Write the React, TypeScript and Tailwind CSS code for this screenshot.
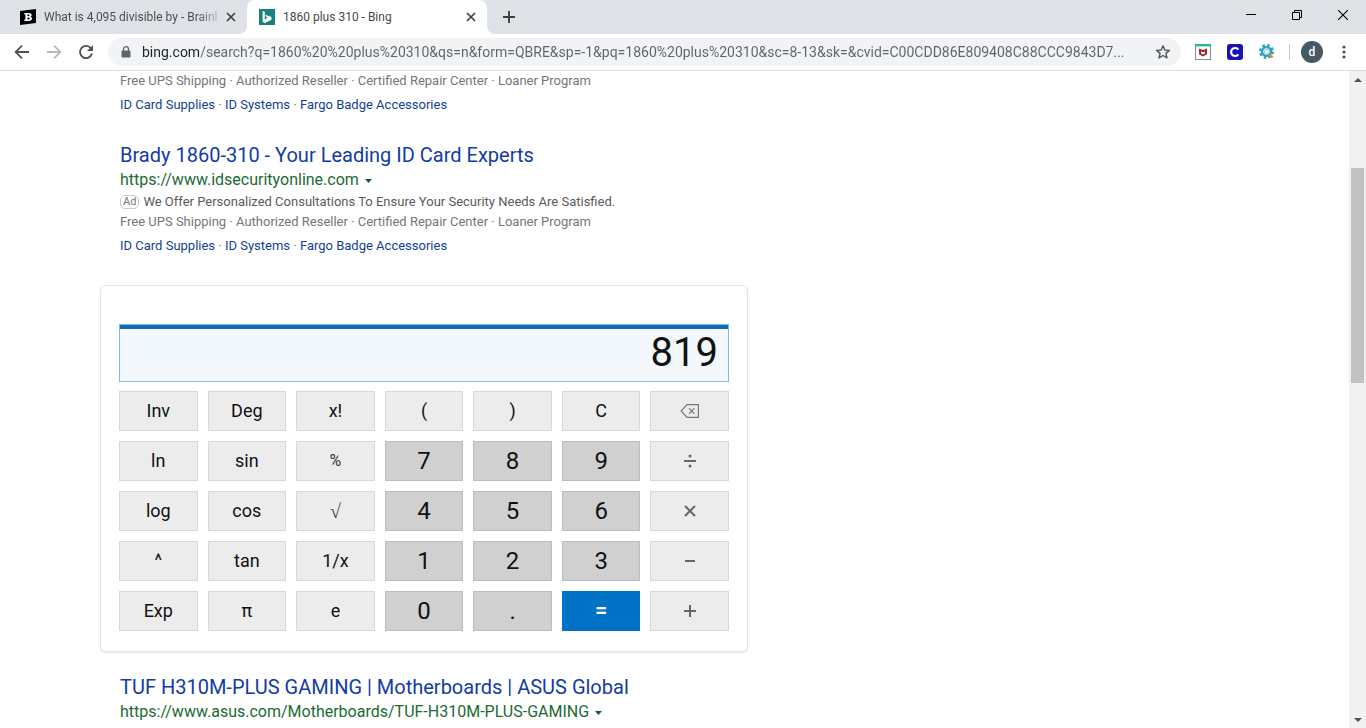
import React from "react";

const URL_TEXT =
  "bing.com/search?q=1860%20%20plus%20310&qs=n&form=QBRE&sp=-1&pq=1860%20plus%20310&sc=8-13&sk=&cvid=C00CDD86E809408C88CCC9843D7...";

const BackspaceIcon = () => (
  <svg width="20" height="16" viewBox="0 0 20 16" fill="none" stroke="#777" strokeWidth="1.2" aria-hidden="true">
    <path d="M7 1.6h11.4v12.8H7L1.2 8z" />
    <path d="M9 5.2l5.4 5.6M14.4 5.2L9 10.8" />
  </svg>
);

const OpIcon = ({ d }: { d: string }) => (
  <svg width="16" height="16" viewBox="0 0 16 16" fill="none" stroke="#666" strokeWidth="2" aria-hidden="true">
    <path d={d} />
  </svg>
);

const DivideIcon = () => (
  <svg width="16" height="16" viewBox="0 0 16 16" fill="#666" aria-hidden="true">
    <rect x="2" y="7" width="12" height="2" />
    <circle cx="8" cy="3.1" r="1.5" />
    <circle cx="8" cy="12.9" r="1.5" />
  </svg>
);

type Key = { label: string; kind?: "num" | "eq" | "small" | "root"; icon?: React.ReactNode };

const KEYS: Key[] = [
  { label: "Inv" },
  { label: "Deg" },
  { label: "x!" },
  { label: "(" },
  { label: ")" },
  { label: "C" },
  { label: "Backspace", icon: <BackspaceIcon /> },
  { label: "ln" },
  { label: "sin" },
  { label: "%", kind: "small" },
  { label: "7", kind: "num" },
  { label: "8", kind: "num" },
  { label: "9", kind: "num" },
  { label: "Divide", icon: <DivideIcon /> },
  { label: "log" },
  { label: "cos" },
  { label: "√", kind: "root" },
  { label: "4", kind: "num" },
  { label: "5", kind: "num" },
  { label: "6", kind: "num" },
  { label: "Multiply", icon: <OpIcon d="M3 3l10 10M13 3L3 13" /> },
  { label: "^" },
  { label: "tan" },
  { label: "1/x" },
  { label: "1", kind: "num" },
  { label: "2", kind: "num" },
  { label: "3", kind: "num" },
  { label: "Subtract", icon: <OpIcon d="M3 8h10" /> },
  { label: "Exp" },
  { label: "π" },
  { label: "e" },
  { label: "0", kind: "num" },
  { label: ".", kind: "num" },
  { label: "=", kind: "eq" },
  { label: "Add", icon: <OpIcon d="M2 8h12M8 2v12" /> },
];

const KEY_STYLE = {
  fn: "bg-[#ececec] border-[#d8d8d8] text-[#111] text-[18px] pb-0.5",
  small: "bg-[#ececec] border-[#d8d8d8] text-[#333] text-[16px]",
  root: "bg-[#ececec] border-[#d8d8d8] text-[#444] text-[20px] font-['Liberation_Serif',serif]",
  num: "bg-[#d0d0d0] border-[#bdbdbd] text-[#111] text-[24px]",
  eq: "bg-[#0072c6] border-[#0072c6] text-white text-[22px] font-medium pb-0.5",
  icon: "bg-[#ececec] border-[#d8d8d8]",
};

const TabClose = () => (
  <svg width="10" height="10" viewBox="0 0 10 10" stroke="#3c4043" strokeWidth="1.7" aria-hidden="true">
    <path d="M1 1l8 8M9 1L1 9" />
  </svg>
);

function TabStrip() {
  return (
    <header className="flex h-[34px] shrink-0 bg-[#dee1e6] text-[12px] text-[#45494d]">
      <div className="flex w-[247px] items-center pl-5 pr-1.5">
        <svg width="16" height="16" viewBox="0 0 16 16" className="shrink-0" aria-hidden="true">
          <path d="M0 2L16 0v14L0 16z" fill="#000" />
          <path d="M4.4 3.9h4.3c1.9 0 3 .7 3 2 0 .9-.5 1.5-1.3 1.8 1 .3 1.6.9 1.6 1.9 0 1.5-1.2 2.4-3.3 2.4H4.4v-1.5h1V5.4h-1zM7.4 5.4v1.7h.9c.8 0 1.2-.3 1.2-.9s-.4-.8-1.2-.8zm0 3v2h1c.8 0 1.3-.3 1.3-1s-.5-1-1.3-1z" fill="#fff" />
        </svg>
        <span className="ml-2 whitespace-nowrap bg-[linear-gradient(to_right,#45494d_88%,#b8bcc0)] bg-clip-text text-transparent">
          What is 4,095 divisible by - Brainl
        </span>
        <button aria-label="Close tab" className="ml-auto flex size-5 shrink-0 items-center justify-center">
          <TabClose />
        </button>
      </div>
      <div className="relative flex w-[240px] items-center rounded-t-lg bg-white pl-3 pr-1.5">
        <svg className="absolute -left-2 bottom-0" width="8" height="8" viewBox="0 0 8 8" aria-hidden="true">
          <path d="M8 0v8H0a8 8 0 0 0 8-8z" fill="#fff" />
        </svg>
        <svg className="absolute -right-2 bottom-0" width="8" height="8" viewBox="0 0 8 8" aria-hidden="true">
          <path d="M0 0v8h8a8 8 0 0 1-8-8z" fill="#fff" />
        </svg>
        <svg width="16" height="16" viewBox="0 0 16 16" className="shrink-0" aria-hidden="true">
          <rect width="16" height="16" fill="#17827b" />
          <path d="M3.6 2l2.2.8v7.6l2.8-1.7-1.4-.7-.9-2.2 6.2 2.3v2.6L5.8 14l-2.2-1.3z" fill="#fff" />
        </svg>
        <span className="ml-2 flex-1 whitespace-nowrap">1860 plus 310 - Bing</span>
        <button aria-label="Close tab" className="flex size-5 items-center justify-center">
          <TabClose />
        </button>
      </div>
      <button aria-label="New tab" className="flex w-11 items-center justify-center">
        <svg width="12" height="12" viewBox="0 0 12 12" stroke="#3c4043" strokeWidth="1.9" aria-hidden="true">
          <path d="M6 0v12M0 6h12" />
        </svg>
      </button>
      <div className="ml-auto flex pb-1">
        <button aria-label="Minimize" className="flex w-[46px] items-center justify-center">
          <svg width="10" height="10" viewBox="0 0 10 10" aria-hidden="true"><path d="M0 4.5h10" stroke="#000" /></svg>
        </button>
        <button aria-label="Restore" className="flex w-[46px] items-center justify-center">
          <svg width="10" height="10" viewBox="0 0 10 10" fill="none" stroke="#000" aria-hidden="true">
            <path d="M.5 2.5h7v7h-7zM2.5 2.5v-2h7v7h-2" />
          </svg>
        </button>
        <button aria-label="Close window" className="flex w-[46px] items-center justify-center">
          <svg width="10" height="10" viewBox="0 0 10 10" stroke="#000" strokeWidth="1.1" aria-hidden="true">
            <path d="M0 0l10 10M10 0L0 10" />
          </svg>
        </button>
      </div>
    </header>
  );
}

const NavArrow = ({ color, flip }: { color: string; flip?: boolean }) => (
  <svg width="16" height="16" viewBox="0 0 16 16" fill="none" stroke={color} strokeWidth="1.8" aria-hidden="true">
    <path d={flip ? "M1 8h13M8 1.6L14.4 8 8 14.4" : "M15 8H2M8 1.6L1.6 8 8 14.4"} />
  </svg>
);

function Toolbar() {
  return (
    <div className="flex h-[37px] shrink-0 items-center border-b border-[#dadce0] bg-white pl-1.5">
      <button aria-label="Back" className="flex w-8 justify-center"><NavArrow color="#505458" /></button>
      <button aria-label="Forward" className="flex w-8 justify-center"><NavArrow color="#b8babd" flip /></button>
      <button aria-label="Reload" className="flex w-8 justify-center">
        <svg width="16" height="16" viewBox="0 0 16 16" aria-hidden="true">
          <path d="M13.2 4.6A6.1 6.1 0 1 0 14 9.6" fill="none" stroke="#505458" strokeWidth="1.9" />
          <path d="M15 1v6H9z" fill="#505458" />
        </svg>
      </button>
      <form className="ml-1.5 flex h-7 min-w-0 flex-1 items-center rounded-full bg-[#f1f3f4] pl-[13px] pr-2.5">
        <svg width="10" height="12" viewBox="0 0 10 12" className="shrink-0" aria-hidden="true">
          <rect x=".5" y="4.4" width="9" height="7.2" rx="1" fill="#5f6368" />
          <path d="M2.5 5V3.2a2.5 2.5 0 0 1 5 0V5" fill="none" stroke="#5f6368" strokeWidth="1.3" />
        </svg>
        <input
          aria-label="Address"
          defaultValue={URL_TEXT}
          className="ml-[11px] min-w-0 flex-1 bg-[linear-gradient(to_right,#202124_57px,#5f6368_57px)] bg-clip-text text-[14px] text-transparent outline-none"
        />
        <button type="button" aria-label="Bookmark" className="ml-2 shrink-0">
          <svg width="16" height="16" viewBox="0 0 16 16" fill="none" stroke="#505458" strokeWidth="1.4" strokeLinejoin="round" aria-hidden="true">
            <path d="M8 1.8l1.8 4.2 4.6.4-3.5 3 1.1 4.5L8 11.5l-4 2.4 1.1-4.5-3.5-3 4.6-.4z" />
          </svg>
        </button>
      </form>
      <div className="ml-3.5 flex items-center gap-4">
        <button aria-label="McAfee WebAdvisor">
          <svg width="16" height="16" viewBox="0 0 16 16" aria-hidden="true">
            <rect x=".5" y=".5" width="15" height="15" fill="#fff" stroke="#8b8b8b" />
            <path d="M0 0h16v2.4H0z" fill="#12c48b" />
            <path d="M4 4.4l4 1.7 4-1.7v5.9l-4 2.2-4-2.2z" fill="#a3242c" />
            <path d="M6 7.4l2 .9 2-.9v1.9l-2 1.1-2-1.1z" fill="#fff" />
          </svg>
        </button>
        <button aria-label="C extension">
          <svg width="16" height="16" viewBox="0 0 16 16" aria-hidden="true">
            <rect width="16" height="16" rx="3" fill="#1c12b4" />
            <path d="M11.3 5.6A4 4 0 1 0 11.3 10.4" fill="none" stroke="#fff" strokeWidth="2.2" />
          </svg>
        </button>
        <button aria-label="Search settings extension">
          <svg width="16" height="16" viewBox="0 0 16 16" aria-hidden="true">
            <circle cx="7.5" cy="7.5" r="6.2" fill="none" stroke="#2aa3c4" strokeWidth="2.6" strokeDasharray="2.6 2.27" />
            <circle cx="7.5" cy="7.5" r="4.4" fill="#fff" stroke="#2aa3c4" strokeWidth="2.4" />
            <circle cx="7.8" cy="7.8" r="2.5" fill="#fff" stroke="#7fa9bb" strokeWidth=".8" />
            <path d="M10.6 10.6l3 2.8" stroke="#f08a24" strokeWidth="2.2" />
          </svg>
        </button>
      </div>
      <span className="ml-3.5 h-4 w-px bg-[#c6c9cd]" />
      <button aria-label="Profile" className="ml-[11px] flex size-[22px] items-center justify-center rounded-full bg-[#455a64] text-[12px] font-medium text-white">
        d
      </button>
      <button aria-label="Menu" className="ml-[11px] mr-3 flex w-5 justify-center">
        <svg width="4" height="14" viewBox="0 0 4 14" fill="#505458" aria-hidden="true">
          <circle cx="2" cy="2" r="1.6" /><circle cx="2" cy="7" r="1.6" /><circle cx="2" cy="12" r="1.6" />
        </svg>
      </button>
    </div>
  );
}

const AdExtras = () => (
  <>
    <p className="text-[13px] leading-5 text-[#767676]">
      Free UPS Shipping · Authorized Reseller · Certified Repair Center · Loaner Program
    </p>
    <p className="mt-1 text-[13px] leading-5 text-[#767676]">
      <a href="#supplies" className="text-[#123f94]">ID Card Supplies</a> ·{" "}
      <a href="#systems" className="text-[#123f94]">ID Systems</a> ·{" "}
      <a href="#fargo" className="text-[#123f94]">Fargo Badge Accessories</a>
    </p>
  </>
);

const ResultHead = ({ title, url }: { title: string; url: string }) => (
  <>
    <h2 className="text-[20px] leading-7">
      <a href="#result" className="text-[#123ba6]">{title}</a>
    </h2>
    <p className="flex items-center gap-1.5 text-[16px] leading-[22px] text-[#1a6b34]">
      {url}
      <svg width="7" height="4" viewBox="0 0 7 4" className="mt-0.5" aria-hidden="true">
        <path d="M0 0h7L3.5 4z" fill="#14602a" />
      </svg>
    </p>
  </>
);

function Calculator() {
  return (
    <section
      aria-label="Calculator"
      className="-ml-5 mt-[29px] rounded-[5px] border border-[#e4e4e4] bg-white px-[18px] pt-[38px] pb-5 shadow-[0_1px_2px_rgba(0,0,0,0.1)]"
    >
      <div className="border border-[#86b4ec] bg-[#f2f8fc]">
        <input
          aria-label="Result"
          defaultValue="819"
          className="block h-[56px] w-full border-t-4 border-[#0c6cb8] pb-1 pr-2.5 text-right text-[40px] text-[#111] outline-none"
        />
      </div>
      <div className="mt-[9px] grid grid-cols-7 gap-2.5">
        {KEYS.map((k) => (
          <button
            key={k.label}
            aria-label={k.icon ? k.label : undefined}
            className={`flex h-10 items-center justify-center border ${KEY_STYLE[k.icon ? "icon" : k.kind ?? "fn"]}`}
          >
            {k.icon ?? k.label}
          </button>
        ))}
      </div>
    </section>
  );
}

function Scrollbar() {
  return (
    <div className="flex w-[17px] shrink-0 flex-col items-center bg-[#f1f1f1]" aria-hidden="true">
      <div className="flex h-[17px] items-center">
        <svg width="8" height="4" viewBox="0 0 8 4"><path d="M0 4l4-4 4 4z" fill="#505050" /></svg>
      </div>
      <div className="grid min-h-0 w-[13px] flex-1 grid-rows-[80fr_215fr_328fr]">
        <div className="row-start-2 bg-[#c1c1c1]" />
      </div>
      <div className="flex h-[17px] items-center">
        <svg width="8" height="4" viewBox="0 0 8 4"><path d="M0 0l4 4 4-4z" fill="#505050" /></svg>
      </div>
    </div>
  );
}

export default function App() {
  return (
    <div className="flex h-screen flex-col overflow-hidden bg-white font-[Roboto,sans-serif]">
      <TabStrip />
      <Toolbar />
      <div className="flex min-h-0 flex-1">
        <main className="min-w-0 flex-1 overflow-hidden pl-[120px]">
          <div className="max-w-[628px]">
            <AdExtras />
            <article className="mt-[26px]">
              <ResultHead title="Brady 1860-310 - Your Leading ID Card Experts" url="https://www.idsecurityonline.com" />
              <p className="mt-px flex items-center gap-1 text-[13px] leading-5 text-[#5a5a5a]">
                <span className="rounded-[5px] border border-[#ccc] px-0.5 text-[11px] leading-3 text-[#767676]">Ad</span>
                We Offer Personalized Consultations To Ensure Your Security Needs Are Satisfied.
              </p>
              <AdExtras />
            </article>
            <Calculator />
            <article className="mt-[21px]">
              <ResultHead
                title="TUF H310M-PLUS GAMING | Motherboards | ASUS Global"
                url="https://www.asus.com/Motherboards/TUF-H310M-PLUS-GAMING"
              />
            </article>
          </div>
        </main>
        <Scrollbar />
      </div>
    </div>
  );
}
